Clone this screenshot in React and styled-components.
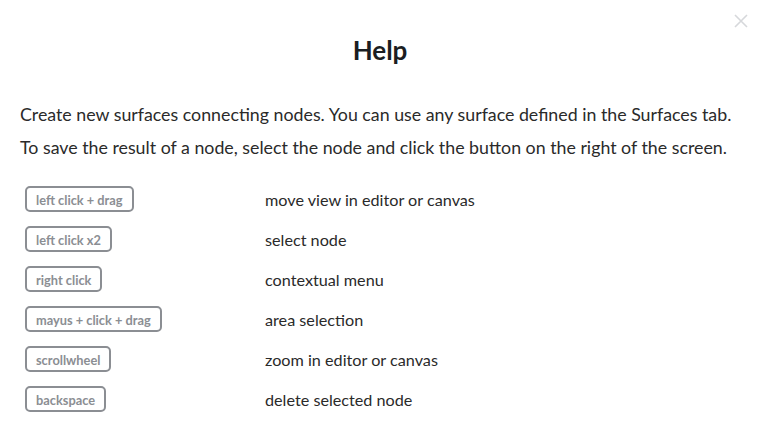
import styled, {createGlobalStyle} from 'styled-components';

const GlobalStyle = createGlobalStyle`
  html, body {
    margin: 0;
    padding: 0;
    background: #fff;
  }
  body {
    font-family: Lato, "Open Sans", sans-serif;
  }
`;

const Modal = styled.div`
  position: relative;
  width: 760px;
  height: 435px;
  box-sizing: border-box;
  padding: 32px 20px 0 20px;
  background: #fff;
  overflow: hidden;
`;

const Close = styled.button`
  position: absolute;
  top: 12px;
  right: 10px;
  width: 18px;
  height: 18px;
  padding: 0;
  border: none;
  background: transparent;
  cursor: pointer;
  svg {
    display: block;
  }
`;

const Title = styled.h2`
  margin: 0 0 30px 0;
  text-align: center;
  font-size: 26px;
  line-height: 36px;
  font-weight: 700;
  color: #1b1e22;
`;

const Text = styled.p`
  margin: 0;
  font-size: 17.8px;
  line-height: 33px;
  color: #2a2a2a;
  white-space: nowrap;
`;

const Shortcuts = styled.div`
  display: grid;
  grid-template-columns: 240px 1fr;
  grid-auto-rows: 40px;
  margin-top: 15px;
  padding-left: 5px;
  align-items: center;
`;

const Key = styled.span`
  justify-self: start;
  box-sizing: border-box;
  height: 26px;
  padding: 1px 9px 0 9px;
  display: inline-flex;
  align-items: center;
  border: 2px solid #8b8e93;
  border-radius: 5px;
  font-size: 12.8px;
  font-weight: 700;
  color: #8b8e93;
`;

const Action = styled.span`
  font-size: 16.2px;
  color: #2a2a2a;
`;

const shortcuts = [
  ['left click + drag', 'move view in editor or canvas'],
  ['left click x2', 'select node'],
  ['right click', 'contextual menu'],
  ['mayus + click + drag', 'area selection'],
  ['scrollwheel', 'zoom in editor or canvas'],
  ['backspace', 'delete selected node'],
];

export default function App() {
  return (
    <>
      <GlobalStyle/>
      <Modal>
        <Close aria-label="close">
          <svg width="18" height="18" viewBox="0 0 18 18">
            <path d="M3 3 L15 15 M15 3 L3 15" stroke="#d6d8db" strokeWidth="1.6" fill="none"/>
          </svg>
        </Close>
        <Title>Help</Title>
        <Text>Create new surfaces connecting nodes. You can use any surface defined in the Surfaces tab.</Text>
        <Text>To save the result of a node, select the node and click the button on the right of the screen.</Text>
        <Shortcuts>
          {shortcuts.map(([key, action]) => [
            <Key key={key}>{key}</Key>,
            <Action key={action}>{action}</Action>,
          ])}
        </Shortcuts>
      </Modal>
    </>
  );
}
